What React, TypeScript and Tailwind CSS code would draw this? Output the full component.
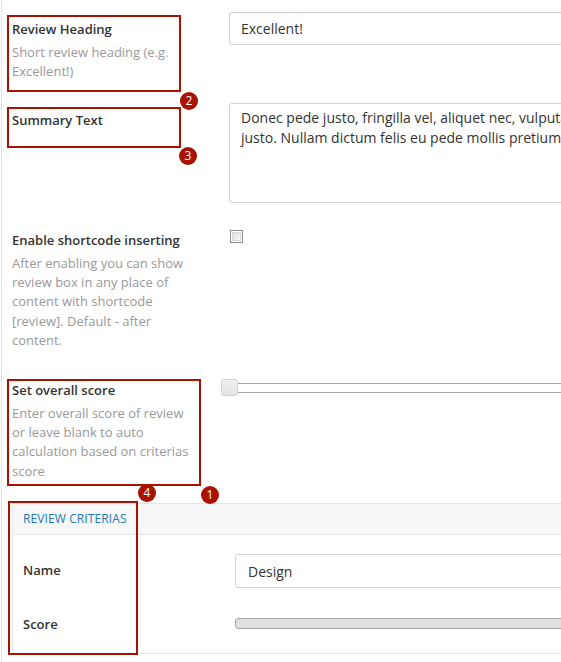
import React from "react";

const Badge = ({ n, className }: { n: number; className: string }) => (
  <div
    className={`absolute w-[18px] h-[18px] rounded-full bg-[#a91100] text-white text-[12px] leading-[18px] text-center font-['Open_Sans',sans-serif] ${className}`}
  >
    {n}
  </div>
);

const Label = ({ title, desc }: { title: string; desc?: string[] }) => (
  <div className="w-[227px] shrink-0 pl-[10px] pr-[26px] pt-[19px]">
    <div className="text-[13px] leading-[20px] font-semibold text-[#333]">{title}</div>
    {desc && (
      <div className="mt-[3.5px] text-[13px] leading-[19.4px] text-[#999]">
        {desc.map((line, i) => (
          <div key={i}>{line}</div>
        ))}
      </div>
    )}
  </div>
);

export default function App() {
  return (
    <div className="relative w-[561px] h-[662px] overflow-hidden bg-white font-['Open_Sans',sans-serif]">
      <div className="ml-px h-full border-l border-[#e5e5e5] w-[900px]">
        {/* Review heading */}
        <div className="flex h-[91px]">
          <Label title="Review Heading" desc={["Short review heading (e.g.", "Excellent!)"]} />
          <div className="pt-[12px] flex-1">
            <div className="h-[33px] border border-[#d1d1d1] rounded-[3px] px-[11px] flex items-center text-[14px] text-[#333] shadow-[inset_0_1px_2px_rgba(0,0,0,0.04)]">
              Excellent!
            </div>
          </div>
        </div>

        {/* Summary */}
        <div className="flex h-[120px]">
          <Label title="Summary Text" />
          <div className="pt-[12px] flex-1">
            <div className="h-[100px] border border-[#d1d1d1] rounded-[3px] px-[11px] pt-[4px] text-[14px] leading-[20px] text-[#333] whitespace-nowrap overflow-hidden">
              <div>Donec pede justo, fringilla vel, aliquet nec, vulputate eget, arcu. In enim justo, rhoncus ut, imperdiet a,</div>
              <div>justo. Nullam dictum felis eu pede mollis pretium. Integer tincidunt. Cras dapibus.</div>
            </div>
          </div>
        </div>

        {/* Shortcode */}
        <div className="flex h-[150px]">
          <Label
            title="Enable shortcode inserting"
            desc={[
              "After enabling you can show",
              "review box in any place of",
              "content with shortcode",
              "[review]. Default - after",
              "content.",
            ]}
          />
          <div className="pt-[19px] pl-px flex-1">
            <div className="w-[13px] h-[13px] border border-[#8e8e8e] bg-white p-px">
              <div className="w-full h-full border border-[#d8d8d8] bg-gradient-to-br from-[#dcdcdc] to-[#fafafa]" />
            </div>
          </div>
        </div>

        {/* Overall score */}
        <div className="flex h-[130px]">
          <Label
            title="Set overall score"
            desc={[
              "Enter overall score of review",
              "or leave blank to auto",
              "calculation based on criterias",
              "score",
            ]}
          />
          <div className="pt-[22px] flex-1">
            <div className="relative h-[10px] border-y border-[#aaa] bg-white">
              <div className="absolute left-[-8px] top-[-5px] w-[17px] h-[17px] rounded-[3px] border border-[#d3d3d3] bg-gradient-to-b from-[#f0f0f0] to-[#e3e3e3]" />
            </div>
          </div>
        </div>

        {/* Criterias panel */}
        <div className="ml-[10px] mt-[12px] border border-[#e5e5e5]">
          <div className="h-[31px] bg-[#f7f7f7] border-b border-[#e5e5e5] pl-[10px] flex items-center text-[12px] text-[#2477b3] tracking-[0.1px]">
            REVIEW CRITERIAS
          </div>
          <div className="pt-[19px] pb-[24px]">
            <div className="flex items-center h-[34px]">
              <div className="w-[222px] pl-[10px] text-[13px] font-semibold text-[#333]">Name</div>
              <div className="flex-1 h-[34px] border border-[#d1d1d1] rounded-[3px] px-[12px] flex items-center text-[14px] text-[#333]">
                Design
              </div>
            </div>
            <div className="flex items-center h-[11px] mt-[30px]">
              <div className="w-[222px] pl-[10px] text-[13px] font-semibold text-[#333] pt-[3px]">Score</div>
              <div className="flex-1 h-[11px] border border-[#aaa] rounded-[3px] bg-[#e0e0e0]" />
            </div>
          </div>
        </div>
      </div>

      {/* Annotations */}
      <div className="absolute left-[7px] top-[15px] w-[174px] h-[77px] border-2 border-[#a91100]" />
      <div className="absolute left-[7px] top-[107px] w-[174px] h-[41px] border-2 border-[#a91100]" />
      <div className="absolute left-[7px] top-[379px] w-[194px] h-[107px] border-2 border-[#a91100]" />
      <div className="absolute left-[8px] top-[501px] w-[130px] h-[154px] border-2 border-[#a91100]" />
      <Badge n={2} className="left-[180px] top-[92px]" />
      <Badge n={3} className="left-[179px] top-[147px]" />
      <Badge n={4} className="left-[138px] top-[484px]" />
      <Badge n={1} className="left-[201px] top-[486px]" />
    </div>
  );
}
